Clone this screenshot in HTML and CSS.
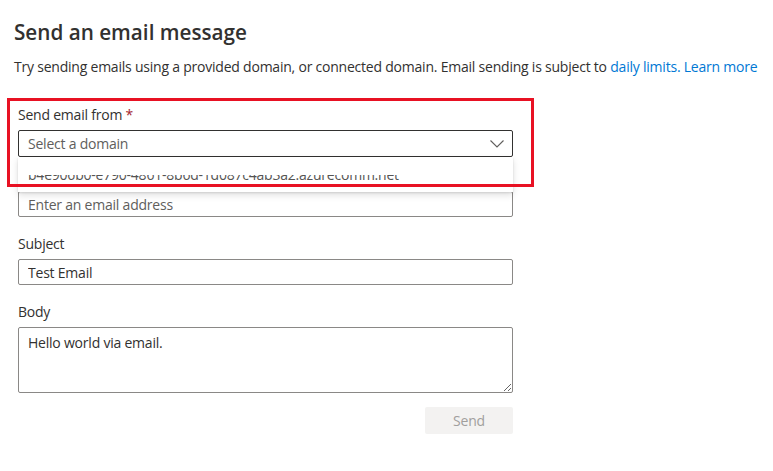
FILE: index.html
```html
<!DOCTYPE html>
<html lang="en">
<head>
<meta charset="utf-8">
<title>Send an email message</title>
<link rel="stylesheet" href="styles.css">
</head>
<body>
<main class="page">
  <h1 class="title">Send an email message</h1>
  <p class="intro">Try sending emails using a provided domain, or connected domain. Email sending is subject to <a class="link" href="#">daily limits.</a> <a class="link" href="#">Learn more</a></p>

  <form class="form">
    <div class="highlight"></div>

    <div class="field field-from">
      <label class="label">Send email from <span class="req">*</span></label>
      <div class="select-wrap">
        <div class="select">
          <span class="placeholder">Select a domain</span>
          <svg class="chevron" width="14" height="8" viewBox="0 0 14 8"><path d="M0.5 0.5 L7 7 L13.5 0.5" fill="none" stroke="#605e5c" stroke-width="1.1"/></svg>
        </div>
        <div class="callout">
          <div class="option-clip"><span class="option-text">b4e906b0-e790-4861-8b6d-1d087c4ab3a2.azurecomm.net</span></div>
        </div>
      </div>
    </div>

    <div class="field field-to">
      <label class="label label-hidden">Send email to</label>
      <input class="input" type="text" placeholder="Enter an email address">
    </div>

    <div class="field">
      <label class="label">Subject</label>
      <input class="input" type="text" value="Test Email">
    </div>

    <div class="field">
      <label class="label">Body</label>
      <textarea class="textarea">Hello world via email.</textarea>
    </div>

    <div class="actions">
      <button class="btn" type="button" disabled>Send</button>
    </div>
  </form>
</main>
</body>
</html>
```

FILE: styles.css
```css
* { box-sizing: border-box; }

html, body {
  margin: 0;
  padding: 0;
  background: #ffffff;
}

body {
  font-family: "Open Sans", "Noto Sans", sans-serif;
  color: #323130;
  font-size: 14px;
  line-height: 20px;
  letter-spacing: -0.22px;
}

.page {
  padding: 18px 14px 0 14px;
}

.title {
  margin: 0;
  font-size: 20.7px;
  line-height: 28px;
  font-weight: 600;
  letter-spacing: 0;
  color: #323130;
}

.intro {
  margin: 11px 0 0 0;
  white-space: nowrap;
  font-size: 14px;
  line-height: 20px;
}

.link {
  color: #0078d4;
  text-decoration: none;
}

.form {
  position: relative;
  margin: 28px 0 0 4px;
  width: 495px;
}

.highlight {
  position: absolute;
  left: -11px;
  top: -7px;
  width: 527px;
  height: 89px;
  border: 3px solid #e81123;
  z-index: 5;
  pointer-events: none;
}

.field {
  display: flex;
  flex-direction: column;
  margin-bottom: 17px;
}

.field-from { margin-bottom: 9px; }

.label {
  display: block;
  line-height: 20px;
  margin-bottom: 5px;
  color: #323130;
}

.label-hidden { visibility: hidden; }

.req { color: #a4262c; }

.select-wrap { position: relative; }

.select {
  height: 27px;
  border: 1px solid #323130;
  border-radius: 2px;
  display: flex;
  align-items: center;
  justify-content: space-between;
  padding: 0 8px 0 9px;
}

.placeholder { color: #605e5c; }

.chevron { display: block; margin-top: 1px; }

.callout {
  position: absolute;
  left: 0;
  right: 0;
  top: 100%;
  height: 35px;
  background: #ffffff;
  box-shadow: 0 3.2px 7.2px rgba(0,0,0,0.13), 0 0.6px 1.8px rgba(0,0,0,0.11);
  z-index: 3;
  padding-top: 18px;
}

.option-clip {
  height: 9px;
  overflow: hidden;
  padding-left: 10px;
}

.option-text {
  display: block;
  margin-top: -10px;
  color: #555453;
  white-space: nowrap;
}

.input {
  height: 26px;
  border: 1px solid #8a8886;
  border-radius: 2px;
  padding: 0 9px;
  font: inherit;
  letter-spacing: -0.22px;
  color: #323130;
  outline: none;
  background: #fff;
}

.input::placeholder { color: #605e5c; opacity: 1; }

.textarea {
  height: 66px;
  border: 1px solid #8a8886;
  border-radius: 2px;
  padding: 5px 9px;
  font: inherit;
  letter-spacing: -0.22px;
  line-height: 20px;
  color: #323130;
  outline: none;
}

.actions {
  display: flex;
  justify-content: flex-end;
  margin-top: -3px;
}

.btn {
  width: 88px;
  height: 27px;
  border: none;
  border-radius: 2px;
  background: #f3f2f1;
  color: #a19f9d;
  font: inherit;
  letter-spacing: -0.22px;
  font-size: 14px;
  padding: 0;
}
```
